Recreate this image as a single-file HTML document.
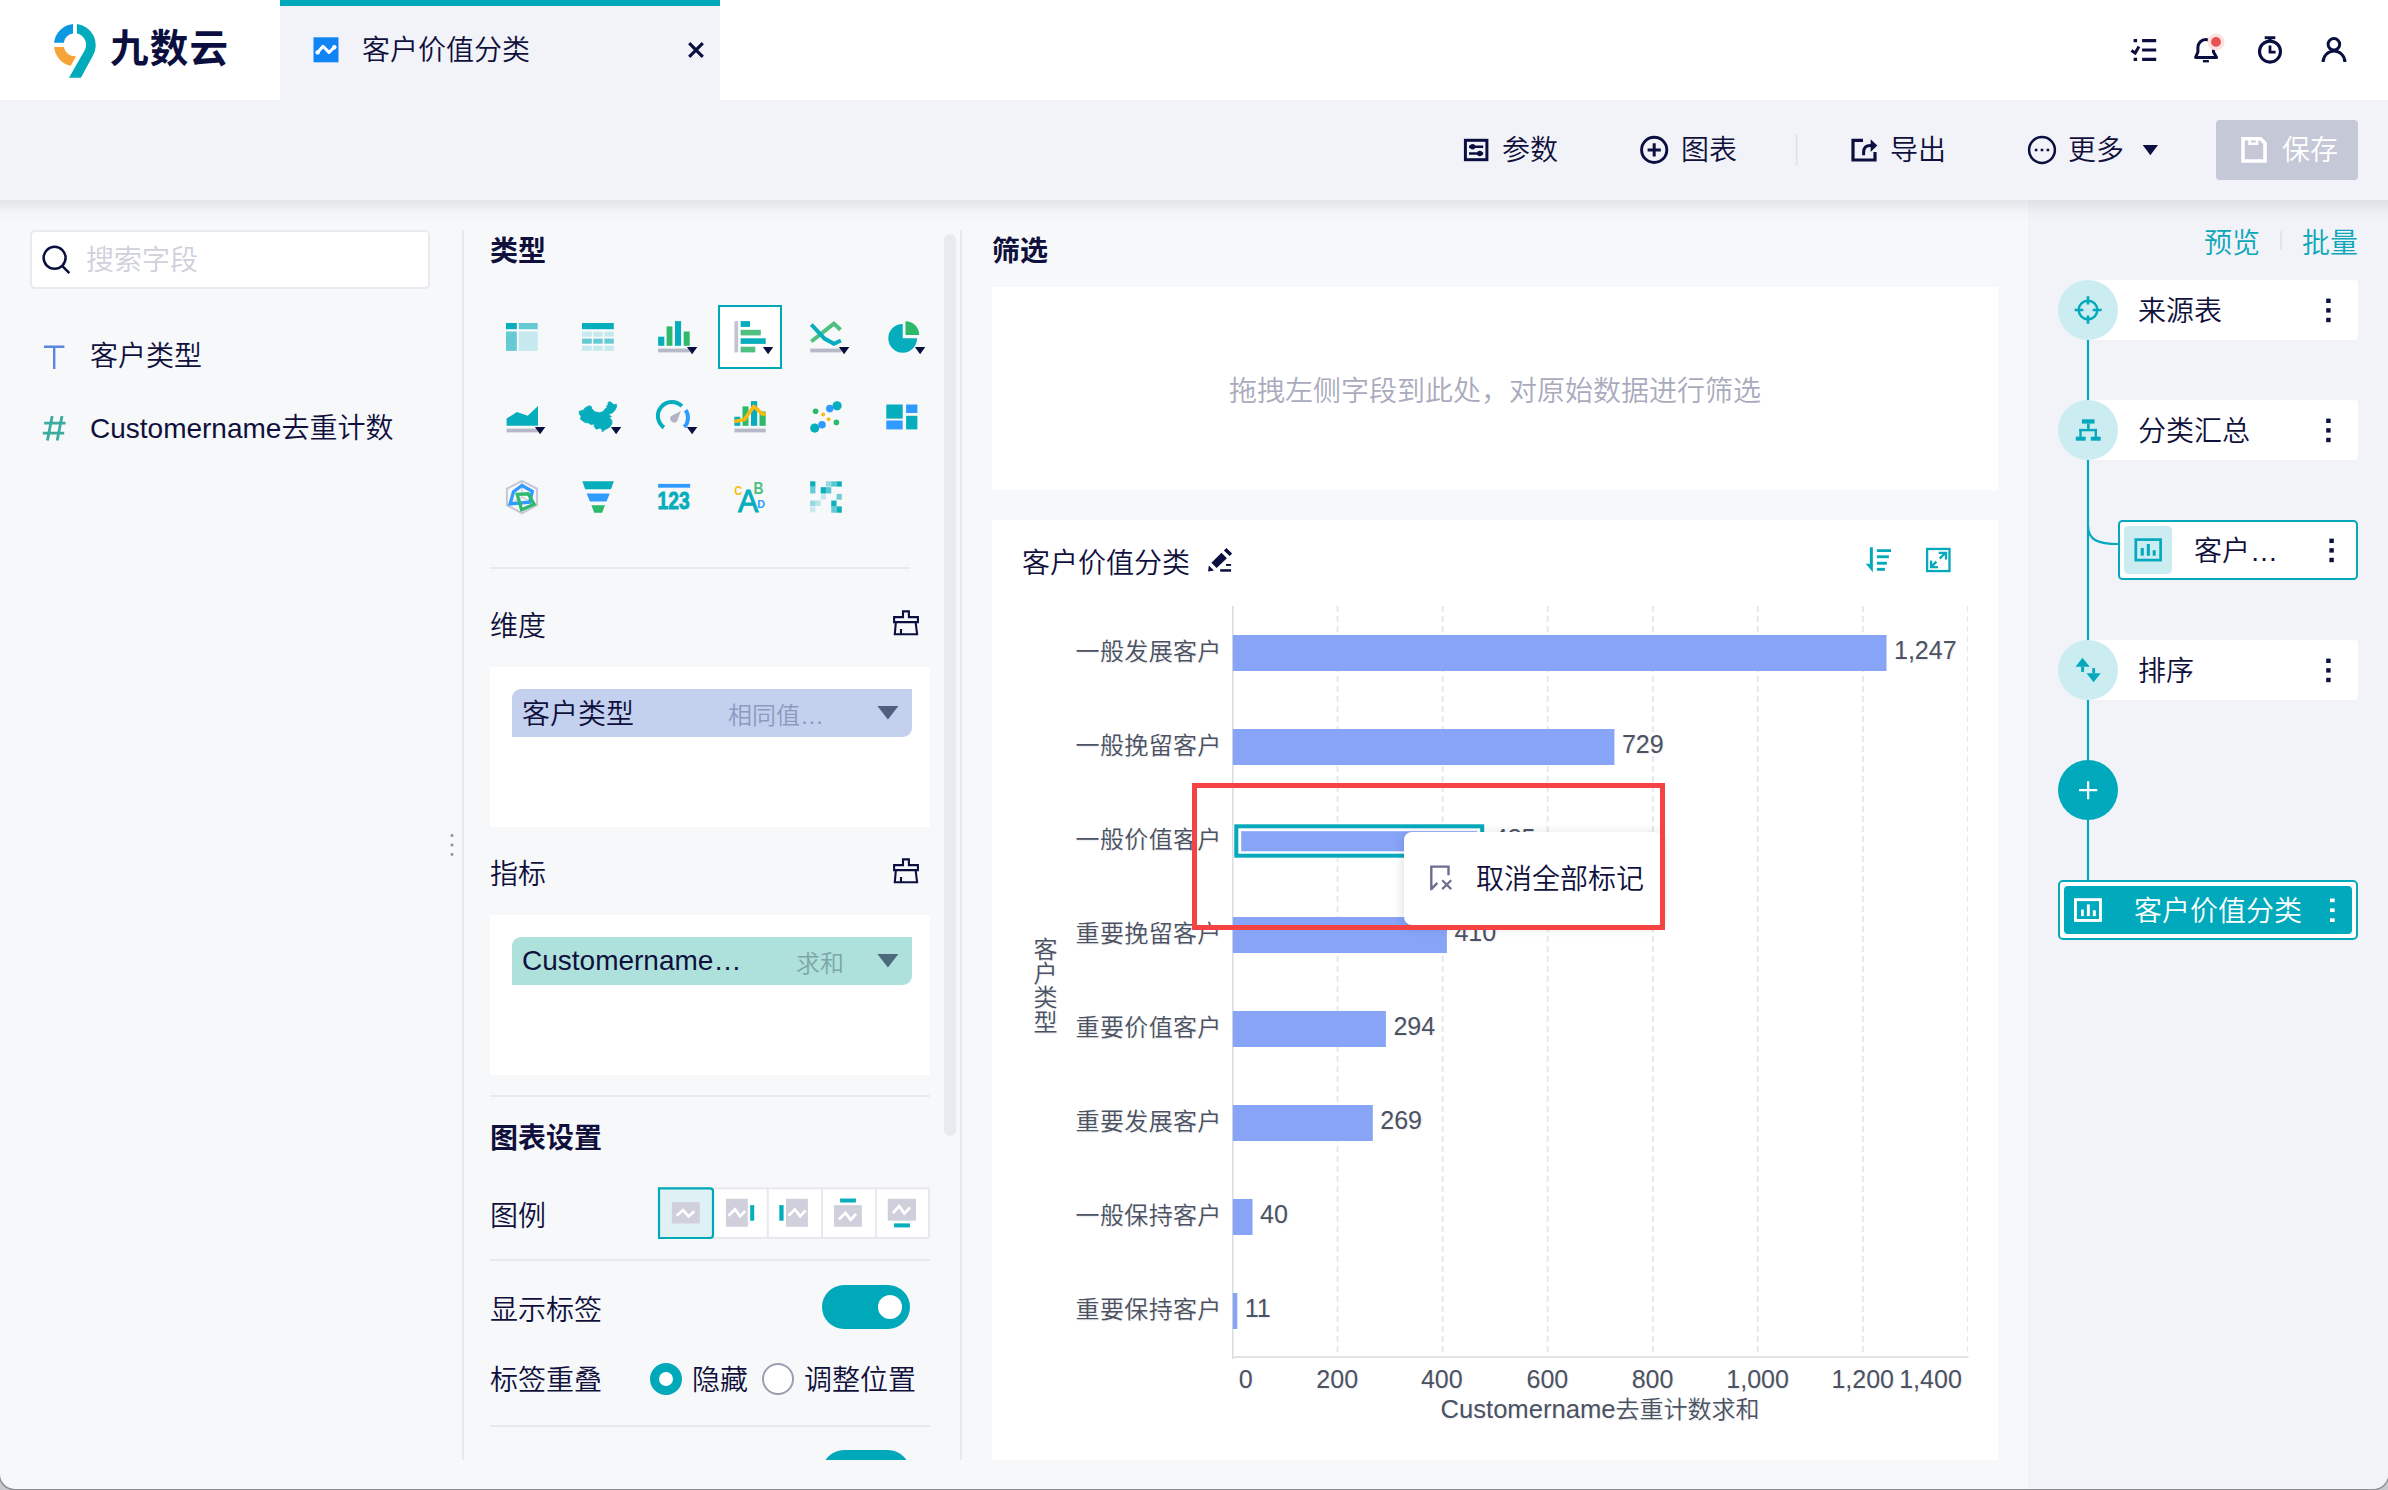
<!DOCTYPE html>
<html lang="zh-CN">
<head>
<meta charset="utf-8">
<title>客户价值分类</title>
<style>
*{box-sizing:border-box;margin:0;padding:0}
html,body{width:2388px;height:1490px;overflow:hidden;background:#c9cacf}
body{font-family:"Liberation Sans","Noto Sans CJK SC",sans-serif;color:#10103c;font-size:28px;position:relative;font-weight:350}
.abs{position:absolute}
.t{position:absolute;white-space:nowrap;line-height:40px;height:40px;margin-top:-18px}
.b{font-weight:700}
svg{position:absolute;overflow:visible}
#app{position:absolute;left:0;top:0;width:2388px;height:1489px;background:#f7f8fa;border-radius:0 0 15px 15px;overflow:hidden;box-shadow:0 0 0 1.6px #8f9093}
/* top bar */
#top{position:absolute;left:0;top:0;width:2388px;height:100px;background:#fff}
#tab{position:absolute;left:280px;top:0;width:440px;height:100px;background:#f2f3f8;border-top:6px solid #00a9ba}
#toolbar{position:absolute;left:0;top:100px;width:2388px;height:100px;background:#f2f3f8;z-index:5}
#right{position:absolute;left:2028px;top:200px;width:360px;height:1290px;background:#f2f3f8}
.vline{position:absolute;width:2px;background:#e8e9ec}
.hline{position:absolute;height:2px;background:#e8e9ec}
.white{position:absolute;background:#fff}
.ct{position:absolute;white-space:nowrap;font-size:24px;line-height:36px;height:36px;margin-top:-16px;color:#4a5264;text-shadow:1px 1px 1.5px rgba(0,0,0,.09)}
.ct.n{font-size:25px;margin-top:-18px}
.ct.c{width:100px;text-align:center}
</style>
</head>
<body>
<div id="app">

<!-- ===== TOP BAR ===== -->
<div id="top">
  <svg style="left:0;top:0" width="260" height="100" viewBox="0 0 260 100">
    <path d="M54.07,42.7 A21.1,21.1 0 0 1 72.98,24.07 L72.98,33.57 A11.4,11.4 0 0 0 63.74,42.7 Z" fill="#0c98e0"/>
    <path d="M54.07,47.1 A21.1,21.1 0 0 0 70.78,65.84 L76.06,56.17 A11.4,11.4 0 0 1 63.74,47.1 Z" fill="#f6a338"/>
    <path d="M76.94,24.07 A21.1,21.1 0 0 1 93.0,55.5 L80.9,77.7 L69.0,77.7 L84.6,50.4 A11.4,11.4 0 0 0 76.94,33.57 Z" fill="#00abbb"/>
  </svg>
  <div class="t" style="left:110px;top:47px;font-size:38.5px;font-weight:700;font-family:'Liberation Sans','Noto Sans CJK SC',sans-serif;color:#0b0f40;letter-spacing:1.2px;line-height:40px">九数云</div>
  <div id="tab">
    <svg style="left:33px;top:31px" width="26" height="26" viewBox="0 0 26 26">
      <rect x="0.5" y="0.3" width="25" height="25" fill="#1184f5"/>
      <path d="M4.6,15.4 L10,9.3 L16,15.4 L21.3,10.2" fill="none" stroke="#fff" stroke-width="3" stroke-linecap="round" stroke-linejoin="round"/>
      <circle cx="4.6" cy="15.4" r="2.2" fill="#fff"/><circle cx="21.3" cy="10.2" r="2.2" fill="#fff"/>
    </svg>
    <div class="t" style="left:82px;top:43px">客户价值分类</div>
    <svg style="left:408px;top:36px" width="16" height="16" viewBox="0 0 16 16"><path d="M1.2,1.2 L14.8,14.8 M14.8,1.2 L1.2,14.8" stroke="#0b0f40" stroke-width="3.2" fill="none"/></svg>
  </div>
  <!-- right icons -->
  <svg style="left:2120px;top:25px" width="240" height="50" viewBox="0 0 240 50" fill="none" stroke="#0b0f40" stroke-width="3.2">
    <path d="M22.1,15.6 H36.2 M22.1,25 H36.2 M22.1,34.4 H36.2"/>
    <path d="M13.6,15.6 H17.1 M13.6,34.4 H17.1"/>
    <path d="M11.4,25.4 L15.2,28 L19,21.4" stroke-width="3"/>
    <!-- bell -->
    <path d="M75.6,32.4 H96.6 L93.5,27 V22.4 A7.8,7.8 0 0 0 77.9,22.4 V27 Z" stroke-width="3" stroke-linejoin="round"/>
    <path d="M82.9,36.2 H88.9" stroke-width="2.4"/>
    <circle cx="96" cy="16.9" r="8.5" fill="#fbe1e1" stroke="none"/>
    <circle cx="96" cy="16.9" r="4.9" fill="#e85252" stroke="none"/>
    <!-- timer -->
    <path d="M144.7,12.7 H155.3" stroke-width="2.9"/>
    <path d="M150,13 V16" stroke-width="3"/>
    <circle cx="150" cy="26.6" r="10.5" stroke-width="3.1"/>
    <path d="M150,20.6 V27.1 H155.6" stroke-width="2.8"/>
    <!-- user -->
    <circle cx="213.9" cy="19.3" r="5.8" stroke-width="3"/>
    <path d="M203.1,36.9 A10.9,10.9 0 0 1 224.9,36.9" stroke-width="3"/>
  </svg>
</div>

<!-- ===== TOOLBAR ===== -->
<div id="toolbar">
  <svg style="left:1450px;top:20px" width="720" height="60" viewBox="0 0 720 60" fill="none" stroke="#0b0f40" stroke-width="3">
    <!-- param -->
    <rect x="15.4" y="20.3" width="21.5" height="19.4"/>
    <path d="M19,26.7 H33.2 M19,33.5 H33.2" stroke-width="2.6"/>
    <circle cx="22.6" cy="26.7" r="2.7" fill="#0b0f40" stroke="none"/><circle cx="29.8" cy="33.5" r="2.7" fill="#0b0f40" stroke="none"/>
    <!-- chart plus -->
    <circle cx="204.2" cy="29.9" r="12.6" stroke-width="2.9"/>
    <path d="M197.6,29.9 H210.8 M204.2,23.3 V36.5" stroke-width="3"/>
    <!-- divider -->
    <path d="M346.7,14.5 V45.5" stroke="#e2e3ea" stroke-width="2"/>
    <!-- export -->
    <path d="M413,20.4 H403 V40 H425 V32" stroke-width="3.2"/>
    <path d="M413.6,35.2 V32.5 Q413.6,25.6 420.5,25.6 H424" stroke-width="3"/>
    <path d="M420.6,19.2 L427.3,25.6 L420.6,32 Z" fill="#0b0f40" stroke="none"/>
    <!-- more -->
    <circle cx="592" cy="30" r="12.9" stroke-width="2.5"/>
    <path d="M584.8,30 H587.4 M590.7,30 H593.3 M596.6,30 H599.2" stroke-width="2.6"/>
    <path d="M692.7,25.1 H708 L700.35,35.2 Z" fill="#0b0f40" stroke="none"/>
  </svg>
  <div class="t" style="left:1502px;top:49px">参数</div>
  <div class="t" style="left:1681px;top:49px">图表</div>
  <div class="t" style="left:1890px;top:49px">导出</div>
  <div class="t" style="left:2068px;top:49px">更多</div>
  <div class="abs" style="left:2216px;top:20px;width:142px;height:60px;border-radius:4px;background:#c5c8d6">
    <svg style="left:25px;top:16px" width="28" height="28" viewBox="0 0 28 28" fill="none" stroke="#fff" stroke-width="3.6">
      <path d="M2,2.7 H19.5 L24,7.2 V25 H2 Z" stroke-linejoin="miter"/>
      <path d="M8.6,3 V7.8 H16 V3" stroke-width="2.6"/>
    </svg>
    <div class="t" style="left:66px;top:29px;color:#fff">保存</div>
  </div>
</div>
<div class="abs" style="left:0;top:200px;width:2388px;height:22px;z-index:4;background:linear-gradient(to bottom,rgba(30,40,60,.09) 0,rgba(30,40,60,.065) 23%,rgba(30,40,60,.03) 45%,rgba(30,40,60,.012) 68%,rgba(30,40,60,0) 100%)"></div>

<!-- ===== LEFT PANEL ===== -->
<div id="left">
  <div class="abs" style="left:30px;top:230px;width:400px;height:59px;background:#fff;border:2px solid #e9eaef;border-radius:5px"></div>
  <svg style="left:40px;top:243px" width="34" height="34" viewBox="0 0 34 34" fill="none" stroke="#0b0f40" stroke-width="2.5">
    <circle cx="14.6" cy="14.8" r="11"/><path d="M22.2,22.8 L29.3,30.2"/>
  </svg>
  <div class="t" style="left:86px;top:259px;color:#cfd0da">搜索字段</div>
  <svg style="left:40px;top:340px" width="30" height="34" viewBox="0 0 30 34" fill="none" stroke="#5b86e0" stroke-width="2.4">
    <path d="M4,6.7 H24.4 M14.2,6.7 V29"/>
  </svg>
  <div class="t" style="left:90px;top:355px">客户类型</div>
  <svg style="left:40px;top:412px" width="30" height="34" viewBox="0 0 30 34" fill="none" stroke="#3aab9c" stroke-width="2.8">
    <path d="M4.2,11.2 H25.6 M2.8,21.2 H24.2 M12.2,4 L7.4,28.6 M22,4 L17.2,28.6"/>
  </svg>
  <div class="t" style="left:90px;top:427px">Customername去重计数</div>
  <div class="vline" style="left:462px;top:230px;height:1230px"></div>
  <svg style="left:448px;top:830px" width="8" height="30" viewBox="0 0 8 30" fill="#8a8ca8"><rect x="2.7" y="4.2" width="2.6" height="2.6"/><rect x="2.7" y="13.7" width="2.6" height="2.6"/><rect x="2.7" y="23.1" width="2.6" height="2.6"/></svg>
</div>

<!-- ===== MIDDLE PANEL ===== -->
<div id="mid">
  <div class="t b" style="left:490px;top:250px">类型</div>
<svg style="left:506px;top:321px" width="32" height="32" viewBox="0 0 32 32"><rect x="0" y="2" width="10.8" height="6.2" fill="#06adbd"/><rect x="12.8" y="2" width="18.9" height="6.2" fill="#66cad5"/><rect x="0" y="10.5" width="10.8" height="19.4" fill="#66cad5"/><rect x="12.8" y="10.5" width="18.9" height="19.4" fill="#c5e9ee"/></svg>
<svg style="left:582px;top:321px" width="32" height="32" viewBox="0 0 32 32"><rect x="0" y="2" width="31.8" height="6.2" fill="#06adbd"/><rect x="0" y="10.7" width="9.8" height="5.0" fill="#c5e9ee"/><rect x="11.3" y="10.7" width="9.4" height="5.0" fill="#c5e9ee"/><rect x="22.4" y="10.7" width="9.4" height="5.0" fill="#c5e9ee"/><rect x="0" y="17.6" width="9.8" height="5.1" fill="#66cad5"/><rect x="11.3" y="17.6" width="9.4" height="5.1" fill="#66cad5"/><rect x="22.4" y="17.6" width="9.4" height="5.1" fill="#66cad5"/><rect x="0" y="24.8" width="9.8" height="5.1" fill="#c5e9ee"/><rect x="11.3" y="24.8" width="9.4" height="5.1" fill="#c5e9ee"/><rect x="22.4" y="24.8" width="9.4" height="5.1" fill="#c5e9ee"/></svg>
<svg style="left:658px;top:321px" width="32" height="32" viewBox="0 0 32 32"><rect x="0.1" y="15.7" width="6.2" height="9.1" fill="#06adbd"/><rect x="8.6" y="5.4" width="5.8" height="19.4" fill="#2db96a"/><rect x="17" y="0.1" width="6.1" height="24.7" fill="#06adbd"/><rect x="25.7" y="10.5" width="6.0" height="14.3" fill="#2db96a"/><rect x="0.1" y="27.6" width="31.6" height="3.8" fill="#b7b9c8"/><path d="M28.9,26.1 H39.3 L34.1,33.3 Z" fill="#0b0f40"/></svg>
<div class="abs" style="left:718px;top:305px;width:64px;height:64px;background:#fff;border:2px solid #00a9ba"></div>
<svg style="left:734px;top:321px" width="32" height="32" viewBox="0 0 32 32"><rect x="0.4" y="0.1" width="3.8" height="31.3" fill="#c3c4d1"/><rect x="6.6" y="0.1" width="9.4" height="5.8" fill="#06adbd"/><rect x="6.6" y="8.8" width="20.2" height="5.6" fill="#4fc080"/><rect x="6.6" y="17.3" width="25.1" height="5.6" fill="#06adbd"/><rect x="6.6" y="25.7" width="14.7" height="5.7" fill="#4fc080"/><path d="M28.9,26.1 H39.3 L34.1,33.3 Z" fill="#0b0f40"/></svg>
<svg style="left:810px;top:321px" width="32" height="32" viewBox="0 0 32 32"><path d="M1.3,20.5 L23.9,2.6 L30.5,8.8" fill="none" stroke="#4fc080" stroke-width="4"/><path d="M1.3,3.5 L14.5,17.6 L23.9,22.7 L30.9,19.5" fill="none" stroke="#06adbd" stroke-width="4"/><rect x="0.3" y="27.6" width="31.1" height="3.8" fill="#b7b9c8"/><path d="M28.9,26.1 H39.3 L34.1,33.3 Z" fill="#0b0f40"/></svg>
<svg style="left:886px;top:321px" width="32" height="32" viewBox="0 0 32 32"><path d="M16.7,17.3 L16.7,2.9 A14.4,14.4 0 1 0 31.1,17.3 Z" fill="#06adbd"/><path d="M19.5,13.9 V0.2 A13.7,13.7 0 0 1 33.2,13.9 Z" fill="#2db96a"/><path d="M28.9,26.1 H39.3 L34.1,33.3 Z" fill="#0b0f40"/></svg>
<svg style="left:506px;top:401px" width="32" height="32" viewBox="0 0 32 32"><path d="M0.6,17.6 L10.9,11 L21.7,14.8 L32,5 V24.8 H0.6 Z" fill="#06adbd"/><rect x="0.6" y="27.6" width="31.4" height="3.8" fill="#b7b9c8"/><path d="M28.9,26.1 H39.3 L34.1,33.3 Z" fill="#0b0f40"/></svg>
<svg style="left:582px;top:401px" width="32" height="32" viewBox="0 0 32 32"><path d="M-2.9,10.4 L2.1,8.8 L2.8,7.1 L7.1,4.7 L9.5,5.7 L9.8,7.8 L12.8,10.8 L17.5,11.8 L21.2,10.4 L22.9,8.1 L25.9,6.1 L24.2,5.4 L25.9,4.1 L26.3,1 L28.9,1 L31.3,3.4 L34.6,3.4 L34.6,5.7 L33,9.1 L30.6,11.8 L27.9,12.8 L26.6,14.1 L29.6,15.5 L27.3,16.5 L29.9,19.5 L29.9,22.9 L27.6,26.2 L23.2,28.6 L20.2,30.9 L20.2,28.9 L18.2,26.9 L14.2,28.2 L12.2,25.5 L12.2,22.9 L8.5,23.5 L6.5,21.9 L3.1,21.5 L-1.6,18.2 L-0.9,15.5 L-2.6,13.1 Z" fill="#06adbd" stroke="#06adbd" stroke-width="0.8" stroke-linejoin="round"/><path d="M28.9,26.1 H39.3 L34.1,33.3 Z" fill="#0b0f40"/></svg>
<svg style="left:658px;top:401px" width="32" height="32" viewBox="0 0 32 32"><path d="M5.98,26.5 A14,14 0 1 1 23.9,5.16" fill="none" stroke="#06adbd" stroke-width="4"/><path d="M27.7,9.1 A14,14 0 0 1 26.4,26.1" fill="none" stroke="#2f9bff" stroke-width="4"/><path d="M22.8,10 L13.2,15 A3.9,3.9 0 1 0 19.2,20 Z" fill="#b2b4c4"/><path d="M28.9,26.1 H39.3 L34.1,33.3 Z" fill="#0b0f40"/></svg>
<svg style="left:734px;top:401px" width="32" height="32" viewBox="0 0 32 32"><rect x="0.4" y="15.7" width="5.9" height="9.1" fill="#06adbd"/><rect x="8.5" y="5.4" width="6.0" height="19.4" fill="#2db96a"/><rect x="17" y="0.1" width="6.2" height="24.7" fill="#06adbd"/><rect x="25.5" y="10.5" width="6.2" height="14.3" fill="#2db96a"/><path d="M0.4,20.5 L10.4,18.6 L19.8,5.4 L28.3,12.9 L31.7,13.3" fill="none" stroke="#fbb810" stroke-width="3.6" stroke-linejoin="round"/><rect x="0.4" y="27.6" width="31.3" height="3.8" fill="#b7b9c8"/></svg>
<svg style="left:810px;top:401px" width="32" height="32" viewBox="0 0 32 32"><circle cx="27.1" cy="4.8" r="4.6" fill="#06adbd"/><circle cx="4.7" cy="27.1" r="4.6" fill="#06adbd"/><circle cx="19.8" cy="7.6" r="3.8" fill="#2f9bff"/><circle cx="12" cy="23.8" r="3.8" fill="#2f9bff"/><circle cx="5.6" cy="10.3" r="2.8" fill="#2db96a"/><circle cx="26.4" cy="21.4" r="2.8" fill="#2db96a"/><circle cx="13.2" cy="13.5" r="1.9" fill="#fbb810"/><circle cx="18.6" cy="18.2" r="1.9" fill="#fbb810"/></svg>
<svg style="left:886px;top:401px" width="32" height="32" viewBox="0 0 32 32"><rect x="0.3" y="3.5" width="16.4" height="14.1" fill="#06adbd"/><rect x="20.1" y="3.5" width="11.3" height="8.5" fill="#2f9bff"/><rect x="0.3" y="19.5" width="16.4" height="8.9" fill="#2f9bff"/><rect x="20.1" y="14.8" width="11.3" height="13.6" fill="#06adbd"/></svg>
<svg style="left:506px;top:481px" width="32" height="32" viewBox="0 0 32 32"><path d="M15.96,0 V16.2 M0.9,24.1 L15.96,16.2 L31,24.1" fill="none" stroke="#d3d4de" stroke-width="1.8"/><path d="M15.96,-0.1 L31,7.7 V24.1 L15.96,32.2 L0.9,24.1 V7.7 Z" fill="none" stroke="#c6c8d5" stroke-width="2.1"/><path d="M15.96,4.5 L26.3,10.4 L23.7,21.1 L4.1,23 L7.5,10.8 Z" fill="none" stroke="#2f9bff" stroke-width="3.3"/><path d="M11.2,13.4 L22.2,12.8 L28.1,23.3 L15.6,28.7 Z" fill="none" stroke="#2db96a" stroke-width="3.3"/></svg>
<svg style="left:582px;top:481px" width="32" height="32" viewBox="0 0 32 32"><path d="M0.3,0.3 H31.8 L29,8.2 H3.2 Z" fill="#06adbd"/><path d="M4.7,12.5 H27.7 L24.5,20.5 H7.9 Z" fill="#2f9bff"/><path d="M9.4,24.2 H23 L20.1,31.8 H12.2 Z" fill="#2db96a"/></svg>
<svg style="left:658px;top:481px" width="32" height="32" viewBox="0 0 32 32"><rect x="0.1" y="2.9" width="32.0" height="3.8" fill="#2f9bff"/><text x="-0.4" y="28.4" font-family="Liberation Sans,sans-serif" font-weight="700" font-size="23.6" fill="#06adbd" stroke="#06adbd" stroke-width="0.9" textLength="32" lengthAdjust="spacingAndGlyphs">123</text></svg>
<svg style="left:734px;top:481px" width="32" height="32" viewBox="0 0 32 32"><text x="3.9" y="30.8" font-family="Liberation Sans,sans-serif" font-weight="400" font-size="31" fill="#06adbd" stroke="#06adbd" stroke-width="0.9" textLength="20.4" lengthAdjust="spacingAndGlyphs">A</text><text x="19.6" y="13.3" font-family="Liberation Sans,sans-serif" font-weight="700" font-size="16.4" fill="#4fc080" textLength="10" lengthAdjust="spacingAndGlyphs">B</text><text x="0.2" y="14" font-family="Liberation Sans,sans-serif" font-weight="700" font-size="12" fill="#fbb810" textLength="8" lengthAdjust="spacingAndGlyphs">C</text><text x="23.2" y="26.5" font-family="Liberation Sans,sans-serif" font-weight="700" font-size="11" fill="#2f9bff" textLength="7.8" lengthAdjust="spacingAndGlyphs">D</text></svg>
<svg style="left:810px;top:481px" width="32" height="32" viewBox="0 0 32 32"><rect x="0.13" y="0.31" width="5.28" height="5.28" fill="#06adbd" opacity="0.98"/><rect x="15.96" y="0.31" width="5.28" height="5.28" fill="#06adbd" opacity="0.41"/><rect x="21.24" y="0.31" width="5.28" height="5.28" fill="#06adbd" opacity="0.66"/><rect x="26.52" y="0.31" width="5.28" height="5.28" fill="#06adbd" opacity="0.98"/><rect x="0.13" y="5.58" width="5.28" height="6.87" fill="#06adbd" opacity="0.60"/><rect x="10.69" y="6.17" width="5.28" height="6.28" fill="#06adbd" opacity="0.98"/><rect x="15.96" y="6.17" width="5.28" height="6.28" fill="#06adbd" opacity="0.66"/><rect x="10.69" y="13.29" width="5.28" height="5.03" fill="#06adbd" opacity="0.22"/><rect x="26.52" y="12.87" width="5.28" height="5.86" fill="#06adbd" opacity="0.57"/><rect x="0.13" y="19.57" width="5.28" height="5.44" fill="#06adbd" opacity="0.41"/><rect x="5.41" y="19.57" width="5.28" height="5.44" fill="#06adbd" opacity="0.25"/><rect x="21.24" y="19.57" width="5.28" height="5.86" fill="#06adbd" opacity="0.98"/><rect x="0.13" y="25.43" width="5.28" height="5.86" fill="#06adbd" opacity="0.19"/><rect x="21.24" y="25.43" width="5.28" height="6.28" fill="#06adbd" opacity="0.60"/><rect x="26.52" y="25.43" width="5.28" height="6.28" fill="#06adbd" opacity="0.98"/></svg>
  <div class="abs" style="left:944px;top:234px;width:12px;height:902px;border-radius:6px;background:#e9eaef"></div>
  <div class="vline" style="left:960px;top:230px;height:1230px"></div>
  <div class="hline" style="left:490px;top:567px;width:420px"></div>
  <div class="t" style="left:490px;top:625px">维度</div>
  <svg style="left:890px;top:608px" width="32" height="30" viewBox="0 0 32 30" fill="none" stroke="#0b0f40" stroke-width="2.1"><path d="M13,9.1 H4.1 V14.15 H27.9 V9.1 H18.9 V3.4 H13 Z"/><path d="M5.8,14.8 L4.8,26.2 H27.1 L25.7,14.8 M11,20.9 V26.2"/></svg>
  <div class="white" style="left:490px;top:667px;width:440px;height:160px"></div>
  <div class="abs" style="left:512px;top:689px;width:400px;height:48px;background:#c3d0ee;border-radius:9px 0 9px 0"></div>
  <div class="t" style="left:522px;top:713px">客户类型</div>
  <div class="t" style="left:728px;top:714px;font-size:24px;color:#8d9abf">相同值…</div>
  <svg style="left:877px;top:706px" width="22" height="14" viewBox="0 0 22 14"><path d="M0.4,0 H21.4 L10.9,13.4 Z" fill="#525e80"/></svg>
  <div class="t" style="left:490px;top:873px">指标</div>
  <svg style="left:890px;top:856px" width="32" height="30" viewBox="0 0 32 30" fill="none" stroke="#0b0f40" stroke-width="2.1"><path d="M13,9.1 H4.1 V14.15 H27.9 V9.1 H18.9 V3.4 H13 Z"/><path d="M5.8,14.8 L4.8,26.2 H27.1 L25.7,14.8 M11,20.9 V26.2"/></svg>
  <div class="white" style="left:490px;top:915px;width:440px;height:160px"></div>
  <div class="abs" style="left:512px;top:937px;width:400px;height:48px;background:#aee1dc;border-radius:9px 0 9px 0"></div>
  <div class="t" style="left:522px;top:959px">Customername…</div>
  <div class="t" style="left:796px;top:962px;font-size:24px;color:#7ea6a8">求和</div>
  <svg style="left:877px;top:954px" width="22" height="14" viewBox="0 0 22 14"><path d="M0.4,0 H21.4 L10.9,13.4 Z" fill="#4d6a7c"/></svg>
  <div class="hline" style="left:490px;top:1095px;width:440px"></div>
  <div class="t b" style="left:490px;top:1137px">图表设置</div>
  <div class="t" style="left:490px;top:1215px">图例</div>
  <svg style="left:656px;top:1185px" width="276" height="56" viewBox="0 0 276 56"><rect x="3" y="3.2999999999999545" width="270" height="49.600000000000136" fill="#fff" stroke="#e8e9ee" stroke-width="2"/><rect x="110.8" y="3" width="2" height="50.5" fill="#e8e9ee"/><rect x="165" y="3" width="2" height="50.5" fill="#e8e9ee"/><rect x="218.9" y="3" width="2" height="50.5" fill="#e8e9ee"/><path d="M3,3.2999999999999545 H54 Q57,3.2999999999999545 57,6.2999999999999545 V50 Q57,53 54,53 H3 Z" fill="#dff1f5" stroke="#00a9ba" stroke-width="2.2"/><rect x="15.9" y="17.1" width="27.9" height="21.4" fill="#d0d0dc"/><path d="M20.7,30.8 L27,25.1 L32.6,31.4 L38.3,26.3" fill="none" stroke="#fff" stroke-width="2.7"/><rect x="69.9" y="13.8" width="21.9" height="28.0" fill="#d0d0dc"/><rect x="94.2" y="20.1" width="4.0" height="15.6" fill="#06adbd"/><path d="M72.3,30.8 L79,24.4 L84.1,31.2 L89.3,26" fill="none" stroke="#fff" stroke-width="2.7"/><rect x="123.3" y="20.1" width="4.3" height="15.6" fill="#06adbd"/><rect x="130" y="13.8" width="21.9" height="28.0" fill="#d0d0dc"/><path d="M132.4,30.8 L138.8,24.4 L144.2,31.2 L149.7,25.4" fill="none" stroke="#fff" stroke-width="2.7"/><rect x="184.1" y="13.5" width="15.8" height="4.0" fill="#06adbd"/><rect x="178" y="20.1" width="27.9" height="21.7" fill="#d0d0dc"/><path d="M182.9,34.5 L189.5,27.8 L194.6,34.8 L200.1,29" fill="none" stroke="#fff" stroke-width="2.7"/><rect x="231.8" y="13.8" width="28.2" height="21.9" fill="#d0d0dc"/><rect x="238.1" y="38.4" width="15.8" height="4.0" fill="#06adbd"/><path d="M236.9,28 L243.2,21.1 L248.4,28.4 L254.1,22.3" fill="none" stroke="#fff" stroke-width="2.7"/></svg>
  <div class="hline" style="left:490px;top:1259px;width:440px"></div>
  <div class="t" style="left:490px;top:1309px">显示标签</div>
  <div class="abs" style="left:822px;top:1285px;width:88px;height:44px;border-radius:22px;background:#00a9ba"><div class="abs" style="left:56px;top:10px;width:24px;height:24px;border-radius:12px;background:#fff"></div></div>
  <div class="t" style="left:490px;top:1379px">标签重叠</div>
  <div class="abs" style="left:650px;top:1363px;width:32px;height:32px;border-radius:16px;border:9px solid #00a9ba;background:#fff"></div>
  <div class="t" style="left:692px;top:1379px">隐藏</div>
  <div class="abs" style="left:762px;top:1363px;width:32px;height:32px;border-radius:16px;border:2px solid #9a9db2;background:#fff"></div>
  <div class="t" style="left:804px;top:1379px">调整位置</div>
  <div class="hline" style="left:490px;top:1425px;width:440px"></div>
  <div class="abs" style="left:822px;top:1450px;width:88px;height:10px;overflow:hidden"><div class="abs" style="left:0;top:0;width:88px;height:44px;border-radius:22px;background:#00a9ba"></div></div>
</div>

<!-- ===== MAIN ===== -->
<div id="main">
  <div class="t b" style="left:992px;top:250px">筛选</div>
  <div class="white" style="left:992px;top:287px;width:1006px;height:203px"></div>
  <div class="t" style="left:1229px;top:390px;color:#a9abbd">拖拽左侧字段到此处，对原始数据进行筛选</div>
  <div id="card" class="white" style="left:992px;top:520px;width:1006px;height:940px">
    <svg style="left:0;top:0" width="1006" height="940" viewBox="0 0 1006 940"><path d="M345.6,86 V836" stroke="#e7e8eb" stroke-width="2" stroke-dasharray="6 4"/><path d="M450.7,86 V836" stroke="#e7e8eb" stroke-width="2" stroke-dasharray="6 4"/><path d="M555.7,86 V836" stroke="#e7e8eb" stroke-width="2" stroke-dasharray="6 4"/><path d="M660.8,86 V836" stroke="#e7e8eb" stroke-width="2" stroke-dasharray="6 4"/><path d="M765.8,86 V836" stroke="#e7e8eb" stroke-width="2" stroke-dasharray="6 4"/><path d="M870.9,86 V836" stroke="#e7e8eb" stroke-width="2" stroke-dasharray="6 4"/><path d="M975.4,86 V836" stroke="#e7e8eb" stroke-width="1.2" stroke-dasharray="6 4"/><path d="M240.8,86 V839" stroke="#dcdde1" stroke-width="1.6"/><path d="M240.0,837 H976.5999999999999" stroke="#e1e2e5" stroke-width="2.2"/><rect x="240.8" y="115" width="653.7" height="36" fill="#87a4f6"/><rect x="240.8" y="209" width="381.6" height="36" fill="#87a4f6"/><rect x="244.3" y="306.3" width="245.9" height="29.4" fill="#fff" stroke="#06a9bc" stroke-width="4"/><rect x="249.2" y="311.2" width="235.8" height="20.1" fill="#87a4f6"/><rect x="240.8" y="397" width="214.1" height="36" fill="#87a4f6"/><rect x="240.8" y="491" width="153.1" height="36" fill="#87a4f6"/><rect x="240.8" y="585" width="140.0" height="36" fill="#87a4f6"/><rect x="240.8" y="679" width="19.7" height="36" fill="#87a4f6"/><rect x="240.8" y="773" width="4.5" height="36" fill="#87a4f6"/></svg>
<div class="ct" style="right:776.3px;top:129.5px;letter-spacing:.35px">一般发展客户</div>
<div class="ct n" style="left:902.0px;top:130px">1,247</div>
<div class="ct" style="right:776.3px;top:223.5px;letter-spacing:.35px">一般挽留客户</div>
<div class="ct n" style="left:629.9px;top:224px">729</div>
<div class="ct" style="right:776.3px;top:317.5px;letter-spacing:.35px">一般价值客户</div>
<div class="ct n" style="left:501.8px;top:318px">485</div>
<div class="ct" style="right:776.3px;top:411.5px;letter-spacing:.35px">重要挽留客户</div>
<div class="ct n" style="left:462.4px;top:412px">410</div>
<div class="ct" style="right:776.3px;top:505.5px;letter-spacing:.35px">重要价值客户</div>
<div class="ct n" style="left:401.4px;top:506px">294</div>
<div class="ct" style="right:776.3px;top:599.5px;letter-spacing:.35px">重要发展客户</div>
<div class="ct n" style="left:388.3px;top:600px">269</div>
<div class="ct" style="right:776.3px;top:693.5px;letter-spacing:.35px">一般保持客户</div>
<div class="ct n" style="left:268.0px;top:694px">40</div>
<div class="ct" style="right:776.3px;top:787.5px;letter-spacing:.35px">重要保持客户</div>
<div class="ct n" style="left:252.8px;top:788px">11</div>
<div class="ct n c" style="left:203.7px;top:859px">0</div>
<div class="ct n c" style="left:295.2px;top:859px">200</div>
<div class="ct n c" style="left:399.8px;top:859px">400</div>
<div class="ct n c" style="left:505.4px;top:859px">600</div>
<div class="ct n c" style="left:610.5px;top:859px">800</div>
<div class="ct n c" style="left:715.6px;top:859px">1,000</div>
<div class="ct n c" style="left:820.7px;top:859px">1,200</div>
<div class="ct n c" style="left:888.5px;top:859px">1,400</div>
<div class="ct c" style="left:358px;width:500px;top:887px"><span style="font-size:25.6px">Customername</span>去重计数求和</div>
<div class="ct" style="left:41.5px;top:466.5px;width:24px;height:97px;margin-top:-48.5px;line-height:24.2px;white-space:normal;word-break:break-all">客户类型</div>
<div class="abs" style="left:412px;top:312px;width:258px;height:92.5px;background:#fff;border-radius:8px;box-shadow:0 2px 12px rgba(20,20,60,.16)">
  <svg style="left:22px;top:30px" width="32" height="32" viewBox="0 0 32 32" fill="none" stroke="#6b6f8d" stroke-width="2.4"><path d="M5.3,28.2 V4.6 H22.5 V13.2 M5.3,27.3 L11.3,20.9"/><path d="M16.2,18.2 L25.2,27.1 M25.2,18.2 L16.2,27.1" stroke-width="2.2"/></svg>
  <div class="t" style="left:72px;top:46px">取消全部标记</div>
</div>
<div class="abs" style="left:200px;top:263px;width:473px;height:147px;border:5px solid #f54242"></div>
    <div class="t" style="left:30px;top:42px">客户价值分类</div>
    <svg style="left:213px;top:25px" width="32" height="32" viewBox="0 0 32 32" fill="#0b0f40"><path d="M21.4,2.9 L27.1,8.5 L24.6,11 L18.9,5.4 Z M16.5,7.8 L21.9,13.2 L11.6,23.1 L6.4,17.7 Z M3.8,20.4 L9,25.6 L3.1,26.6 Z"/><rect x="21" y="19" width="5.1" height="1.9"/><rect x="15.2" y="24.2" width="10.9" height="2.5"/></svg>
    <svg style="left:870px;top:25px" width="32" height="32" viewBox="0 0 32 32" fill="#06a9bc"><path d="M7.85,2.3 H10.86 V27.2 L3.6,18.4 L7.85,18.9 Z"/><rect x="14.9" y="4.2" width="14.1" height="2.8"/><rect x="14.9" y="10.35" width="12" height="2.85"/><rect x="14.9" y="16.8" width="10" height="2.85"/><rect x="14.9" y="22.9" width="8" height="2.9"/></svg>
    <svg style="left:930px;top:25px" width="32" height="32" viewBox="0 0 32 32" fill="none" stroke="#06a9bc" stroke-width="2.3"><rect x="5.1" y="3.95" width="22.4" height="22.1"/><path d="M17.7,13.6 L23,8.3 M16.7,7.9 H24 V14.6 M14.4,16.6 L9.2,21.9 M9.1,15.4 V22.1 H15.9"/></svg>
  </div>
</div>

<!-- ===== RIGHT PANEL ===== -->
<div id="right">
  <svg style="left:-2028px;top:-200px" width="2388" height="1490" viewBox="0 0 2388 1490"><path d="M2088,338 V402" stroke="#06a9bc" stroke-width="2.2" fill="none"/><path d="M2088,458 V642" stroke="#06a9bc" stroke-width="2.2" fill="none"/><path d="M2088,698 V762" stroke="#06a9bc" stroke-width="2.2" fill="none"/><path d="M2088,818 V881" stroke="#06a9bc" stroke-width="2.2" fill="none"/><path d="M2088,526 C2088,540 2098,544 2118.5,544" stroke="#06a9bc" stroke-width="2.2" fill="none"/><path d="M2088,280 H2354 Q2358,280 2358,284 V336 Q2358,340 2354,340 H2088 Z" fill="#fff"/><circle cx="2088" cy="310" r="30" fill="#cbedf2"/><g transform="translate(2088,310)"><circle cx="0" cy="0" r="9.3" fill="none" stroke="#06a9bc" stroke-width="2.5"/><path d="M0,-13.7 V-5.4 M0,5.4 V13.7 M-13.4,0 H-4.7 M4.7,0 H13.7" stroke="#06a9bc" stroke-width="2.7" fill="none"/></g><rect x="2326.2" y="298.6" width="4.4" height="4.4" fill="#0b0f40"/><rect x="2326.2" y="308.2" width="4.4" height="4.4" fill="#0b0f40"/><rect x="2326.2" y="317.8" width="4.4" height="4.4" fill="#0b0f40"/><path d="M2088,400 H2354 Q2358,400 2358,404 V456 Q2358,460 2354,460 H2088 Z" fill="#fff"/><circle cx="2088" cy="430" r="30" fill="#cbedf2"/><g transform="translate(2088,430)"><g fill="#06a9bc"><rect x="-6.05" y="-10.7" width="12.6" height="4.3"/><rect x="-0.95" y="-6.5" width="2.65" height="5.5"/><rect x="-8.7" y="-1.1" width="17.7" height="2.4"/><rect x="-8.7" y="-1.1" width="2.4" height="8.1"/><rect x="6.6" y="-1.1" width="2.4" height="8.1"/><rect x="-12.2" y="6.7" width="9.9" height="4"/><rect x="2.8" y="6.7" width="9.9" height="4"/></g></g><rect x="2326.2" y="418.6" width="4.4" height="4.4" fill="#0b0f40"/><rect x="2326.2" y="428.2" width="4.4" height="4.4" fill="#0b0f40"/><rect x="2326.2" y="437.8" width="4.4" height="4.4" fill="#0b0f40"/><path d="M2088,640 H2354 Q2358,640 2358,644 V696 Q2358,700 2354,700 H2088 Z" fill="#fff"/><circle cx="2088" cy="670" r="30" fill="#cbedf2"/><g transform="translate(2088,670)"><g fill="#06a9bc"><path d="M-5.5,-12.3 L1.7,-3.2 H-12.5 Z"/><rect x="-6.9" y="-3.3" width="3" height="5.2"/><rect x="4.25" y="-1.9" width="2.85" height="5.2"/><path d="M-1.5,3.2 H12.7 L5.6,12.3 Z"/></g></g><rect x="2326.2" y="658.6" width="4.4" height="4.4" fill="#0b0f40"/><rect x="2326.2" y="668.2" width="4.4" height="4.4" fill="#0b0f40"/><rect x="2326.2" y="677.8" width="4.4" height="4.4" fill="#0b0f40"/><rect x="2119" y="521" width="238" height="58" rx="3.5" fill="#fff" stroke="#06a9bc" stroke-width="2"/><rect x="2124" y="526" width="48" height="48" rx="4.5" fill="#cbedf2"/><rect x="2135.8" y="539.6" width="24.8" height="20.5" fill="none" stroke="#06a9bc" stroke-width="2.7"/><g fill="#06a9bc"><rect x="2140.7" y="548" width="3.1" height="7.7"/><rect x="2146.8" y="544" width="3.1" height="11.7"/><rect x="2152.7" y="550.2" width="3" height="5.5"/></g><rect x="2329.4" y="538.6" width="4.4" height="4.4" fill="#0b0f40"/><rect x="2329.4" y="548.2" width="4.4" height="4.4" fill="#0b0f40"/><rect x="2329.4" y="557.8" width="4.4" height="4.4" fill="#0b0f40"/><circle cx="2088" cy="790" r="30" fill="#00a9bc"/><path d="M2079,790.2 H2097.3 M2088.15,781.2 V799.2" stroke="#fff" stroke-width="2.2" fill="none"/><rect x="2059" y="881" width="298" height="58" rx="4" fill="#fff" stroke="#06a9bc" stroke-width="2"/><rect x="2064" y="886" width="288" height="48" rx="4" fill="#00a9bc"/><rect x="2075.45" y="899.65" width="25" height="20.8" fill="none" stroke="#fff" stroke-width="2.9"/><g fill="#fff"><rect x="2081.1" y="909.5" width="2.7" height="6.6"/><rect x="2086.9" y="904.4" width="2.9" height="11.7"/><rect x="2092.8" y="910.3" width="3" height="5.8"/></g><rect x="2330.0" y="898.5" width="4.7" height="3.7" fill="#fff"/><rect x="2330.0" y="908.4" width="4.7" height="3.7" fill="#fff"/><rect x="2330.0" y="918.3" width="4.7" height="3.7" fill="#fff"/><path d="M2281,231 V250" stroke="#e4e5eb" stroke-width="2"/></svg>
  <div class="t" style="left:176px;top:42px;color:#0ba7b9">预览</div>
  <div class="t" style="left:274px;top:42px;color:#0ba7b9">批量</div>
  <div class="t" style="left:110px;top:110px">来源表</div>
  <div class="t" style="left:110px;top:230px">分类汇总</div>
  <div class="t" style="left:166px;top:350px">客户…</div>
  <div class="t" style="left:110px;top:470px">排序</div>
  <div class="t" style="left:106px;top:710px;color:#fff">客户价值分类</div>
</div>

</div>
</body>
</html>
